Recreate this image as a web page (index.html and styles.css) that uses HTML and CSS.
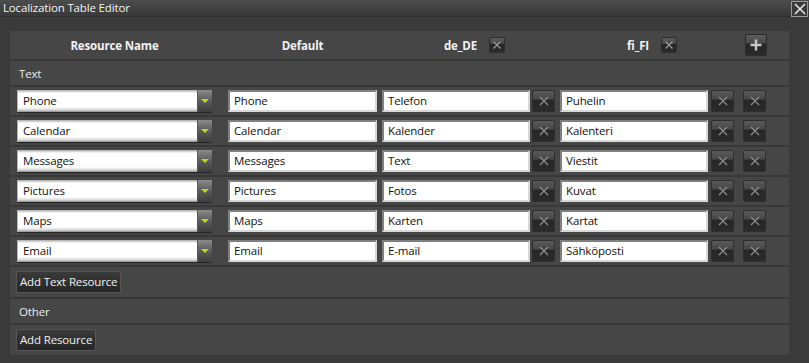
FILE: index.html
```html
<!DOCTYPE html>
<html>
<head>
<meta charset="utf-8">
<link rel="stylesheet" href="styles.css">
</head>
<body>
<div class="window">
  <div class="titlebar">
    <span class="title">Localization Table Editor</span>
    <span class="close"><svg width="12" height="12" viewBox="0 0 12 12"><path d="M1 1L11 11M11 1L1 11" stroke="#e8e8e8" stroke-width="1.6"/></svg></span>
  </div>
  <div class="content">
    <div class="panel">
      <div class="row header">
        <div class="c-name hcell">Resource Name</div>
        <div class="c-def hcell">Default</div>
        <div class="c-lang hcell"><span>de_DE</span><span class="xbtn small"><svg width="10" height="10" viewBox="0 0 10 10"><path d="M1.5 1.5L8.5 8.5M8.5 1.5L1.5 8.5" stroke="#9a9a9a" stroke-width="1.3"/></svg></span></div>
        <div class="c-lang2 hcell"><span>fi_FI</span><span class="xbtn small"><svg width="10" height="10" viewBox="0 0 10 10"><path d="M1.5 1.5L8.5 8.5M8.5 1.5L1.5 8.5" stroke="#9a9a9a" stroke-width="1.3"/></svg></span></div>
        <div class="plus"><svg width="12" height="12" viewBox="0 0 12 12"><path d="M6 0.5V11.5M0.5 6H11.5" stroke="#c8c8c8" stroke-width="2.4"/></svg></div>
      </div>
      <div class="row label">Text</div>

      <div class="row item">
        <div class="dropdown"><span class="dd-text">Phone</span><span class="dd-btn"><i class="tri"></i></span></div>
        <div class="field f-def">Phone</div>
        <div class="field f-lang">Telefon</div>
        <span class="xbtn"><svg width="10" height="10" viewBox="0 0 10 10"><path d="M1 1L9 9M9 1L1 9" stroke="#8c8c8c" stroke-width="1.3"/></svg></span>
        <div class="field f-lang2">Puhelin</div>
        <span class="xbtn"><svg width="10" height="10" viewBox="0 0 10 10"><path d="M1 1L9 9M9 1L1 9" stroke="#8c8c8c" stroke-width="1.3"/></svg></span>
        <span class="xbtn last"><svg width="10" height="10" viewBox="0 0 10 10"><path d="M1 1L9 9M9 1L1 9" stroke="#8c8c8c" stroke-width="1.3"/></svg></span>
      </div>
      <div class="row item">
        <div class="dropdown"><span class="dd-text">Calendar</span><span class="dd-btn"><i class="tri"></i></span></div>
        <div class="field f-def">Calendar</div>
        <div class="field f-lang">Kalender</div>
        <span class="xbtn"><svg width="10" height="10" viewBox="0 0 10 10"><path d="M1 1L9 9M9 1L1 9" stroke="#8c8c8c" stroke-width="1.3"/></svg></span>
        <div class="field f-lang2">Kalenteri</div>
        <span class="xbtn"><svg width="10" height="10" viewBox="0 0 10 10"><path d="M1 1L9 9M9 1L1 9" stroke="#8c8c8c" stroke-width="1.3"/></svg></span>
        <span class="xbtn last"><svg width="10" height="10" viewBox="0 0 10 10"><path d="M1 1L9 9M9 1L1 9" stroke="#8c8c8c" stroke-width="1.3"/></svg></span>
      </div>
      <div class="row item">
        <div class="dropdown"><span class="dd-text">Messages</span><span class="dd-btn"><i class="tri"></i></span></div>
        <div class="field f-def">Messages</div>
        <div class="field f-lang">Text</div>
        <span class="xbtn"><svg width="10" height="10" viewBox="0 0 10 10"><path d="M1 1L9 9M9 1L1 9" stroke="#8c8c8c" stroke-width="1.3"/></svg></span>
        <div class="field f-lang2">Viestit</div>
        <span class="xbtn"><svg width="10" height="10" viewBox="0 0 10 10"><path d="M1 1L9 9M9 1L1 9" stroke="#8c8c8c" stroke-width="1.3"/></svg></span>
        <span class="xbtn last"><svg width="10" height="10" viewBox="0 0 10 10"><path d="M1 1L9 9M9 1L1 9" stroke="#8c8c8c" stroke-width="1.3"/></svg></span>
      </div>
      <div class="row item">
        <div class="dropdown"><span class="dd-text">Pictures</span><span class="dd-btn"><i class="tri"></i></span></div>
        <div class="field f-def">Pictures</div>
        <div class="field f-lang">Fotos</div>
        <span class="xbtn"><svg width="10" height="10" viewBox="0 0 10 10"><path d="M1 1L9 9M9 1L1 9" stroke="#8c8c8c" stroke-width="1.3"/></svg></span>
        <div class="field f-lang2">Kuvat</div>
        <span class="xbtn"><svg width="10" height="10" viewBox="0 0 10 10"><path d="M1 1L9 9M9 1L1 9" stroke="#8c8c8c" stroke-width="1.3"/></svg></span>
        <span class="xbtn last"><svg width="10" height="10" viewBox="0 0 10 10"><path d="M1 1L9 9M9 1L1 9" stroke="#8c8c8c" stroke-width="1.3"/></svg></span>
      </div>
      <div class="row item">
        <div class="dropdown"><span class="dd-text">Maps</span><span class="dd-btn"><i class="tri"></i></span></div>
        <div class="field f-def">Maps</div>
        <div class="field f-lang">Karten</div>
        <span class="xbtn"><svg width="10" height="10" viewBox="0 0 10 10"><path d="M1 1L9 9M9 1L1 9" stroke="#8c8c8c" stroke-width="1.3"/></svg></span>
        <div class="field f-lang2">Kartat</div>
        <span class="xbtn"><svg width="10" height="10" viewBox="0 0 10 10"><path d="M1 1L9 9M9 1L1 9" stroke="#8c8c8c" stroke-width="1.3"/></svg></span>
        <span class="xbtn last"><svg width="10" height="10" viewBox="0 0 10 10"><path d="M1 1L9 9M9 1L1 9" stroke="#8c8c8c" stroke-width="1.3"/></svg></span>
      </div>
      <div class="row item">
        <div class="dropdown"><span class="dd-text">Email</span><span class="dd-btn"><i class="tri"></i></span></div>
        <div class="field f-def">Email</div>
        <div class="field f-lang">E-mail</div>
        <span class="xbtn"><svg width="10" height="10" viewBox="0 0 10 10"><path d="M1 1L9 9M9 1L1 9" stroke="#8c8c8c" stroke-width="1.3"/></svg></span>
        <div class="field f-lang2">Sähköposti</div>
        <span class="xbtn"><svg width="10" height="10" viewBox="0 0 10 10"><path d="M1 1L9 9M9 1L1 9" stroke="#8c8c8c" stroke-width="1.3"/></svg></span>
        <span class="xbtn last"><svg width="10" height="10" viewBox="0 0 10 10"><path d="M1 1L9 9M9 1L1 9" stroke="#8c8c8c" stroke-width="1.3"/></svg></span>
      </div>

      <div class="row action"><span class="btn">Add Text Resource</span></div>
      <div class="row label">Other</div>
      <div class="row action"><span class="btn">Add Resource</span></div>
    </div>
  </div>
</div>
</body>
</html>
```

FILE: styles.css
```css
* { box-sizing: border-box; }
html, body { margin: 0; padding: 0; }
body {
  width: 809px;
  height: 363px;
  background: #383838;
  font-family: "Open Sans", "Noto Sans", sans-serif;
  font-size: 11.5px;
  letter-spacing: -0.15px;
  overflow: hidden;
}
.window { width: 809px; height: 363px; background: #3a3a3a; }
.titlebar {
  height: 17px;
  display: flex;
  align-items: center;
  justify-content: space-between;
  background: linear-gradient(#4c4c4c, #393939);
  border-bottom: 1px solid #2e2e2e;
  padding-left: 3px;
}
.title { color: #f4f4f4; font-size: 11.5px; line-height: 16px; }
.close {
  width: 17px; height: 16px;
  border: 1px solid #9a9a9a;
  background: #3a3a3a;
  display: flex; align-items: center; justify-content: center;
  margin-right: 1px; margin-top: 1px;
}
.content { padding: 14px 20px 7px 10px; background: #3a3a3a; }
.panel { width: 779px; background: #383838; display: flex; flex-direction: column; gap: 2px; }
.row { background: #464646; display: flex; align-items: center; padding-left: 7px; }
.header { height: 28px; color: #f2f2f2; font-weight: bold; }
.hcell { display: flex; align-items: center; justify-content: center; gap: 12px; }
.c-name { width: 195px; }
.c-def { width: 149px; margin-left: 16px; }
.c-lang { width: 173px; margin-left: 5px; padding-left: 12px; }
.c-lang2 { width: 174px; margin-left: 5px; padding-left: 10px; }
.plus {
  width: 22px; height: 22px;
  margin-left: 11px;
  border-radius: 2px;
  background: linear-gradient(#5c5c5c 0%, #4a4a4a 40%, #262626 45%, #2a2a2a 100%);
  border: 1px solid #2c2c2c;
  display: flex; align-items: center; justify-content: center;
}
.label { height: 24px; color: #ececec; padding-left: 9px; }
.item { height: 28px; }
.dropdown {
  width: 195px; height: 22px;
  display: flex;
  border-radius: 2px;
  box-shadow: 0 1px 1px #222;
}
.dd-text {
  flex: 1;
  background: linear-gradient(#a8a8a8 0px, #ffffff 3px, #ffffff 17px, #d8d8d8 20px, #8a8a8a 22px);
  color: #111;
  padding-left: 5px;
  line-height: 22px;
  border-left: 1px solid #b8b8b8;
}
.dd-btn {
  width: 15px;
  background: linear-gradient(#8a8a8a, #5a5a5a 50%, #3e3e3e);
  display: flex; align-items: center; justify-content: center;
  border-left: 1px solid #555;
}
.tri {
  width: 0; height: 0;
  border-left: 4px solid transparent;
  border-right: 4px solid transparent;
  border-top: 4px solid #b8dc1c;
}
.field {
  height: 22px;
  background: #fff;
  color: #111;
  line-height: 18px;
  padding-left: 4px;
  border: 2px solid;
  border-color: #808080 #d8d8d8 #d8d8d8 #808080;
}
.f-def { width: 149px; margin-left: 16px; }
.f-lang { width: 148px; margin-left: 5px; }
.f-lang2 { width: 148px; margin-left: 5px; }
.xbtn {
  width: 23px; height: 22px;
  margin-left: 2px;
  border-radius: 2px;
  background: linear-gradient(#5a5a5a 0%, #474747 40%, #262626 46%, #2b2b2b 100%);
  border: 1px solid #2e2e2e;
  display: flex; align-items: center; justify-content: center;
}
.f-lang2 + .xbtn { margin-left: 3px; }
.xbtn.last { margin-left: 9px; }
.xbtn.small { width: 16px; height: 16px; margin-left: 0; }
.action { height: 30px; padding-left: 6px; }
.btn {
  height: 22px;
  padding: 0 3px;
  line-height: 20px;
  color: #f0f0f0;
  background: linear-gradient(#3a3a3a, #262626);
  border: 1px solid #555;
  border-radius: 2px;
}
```
